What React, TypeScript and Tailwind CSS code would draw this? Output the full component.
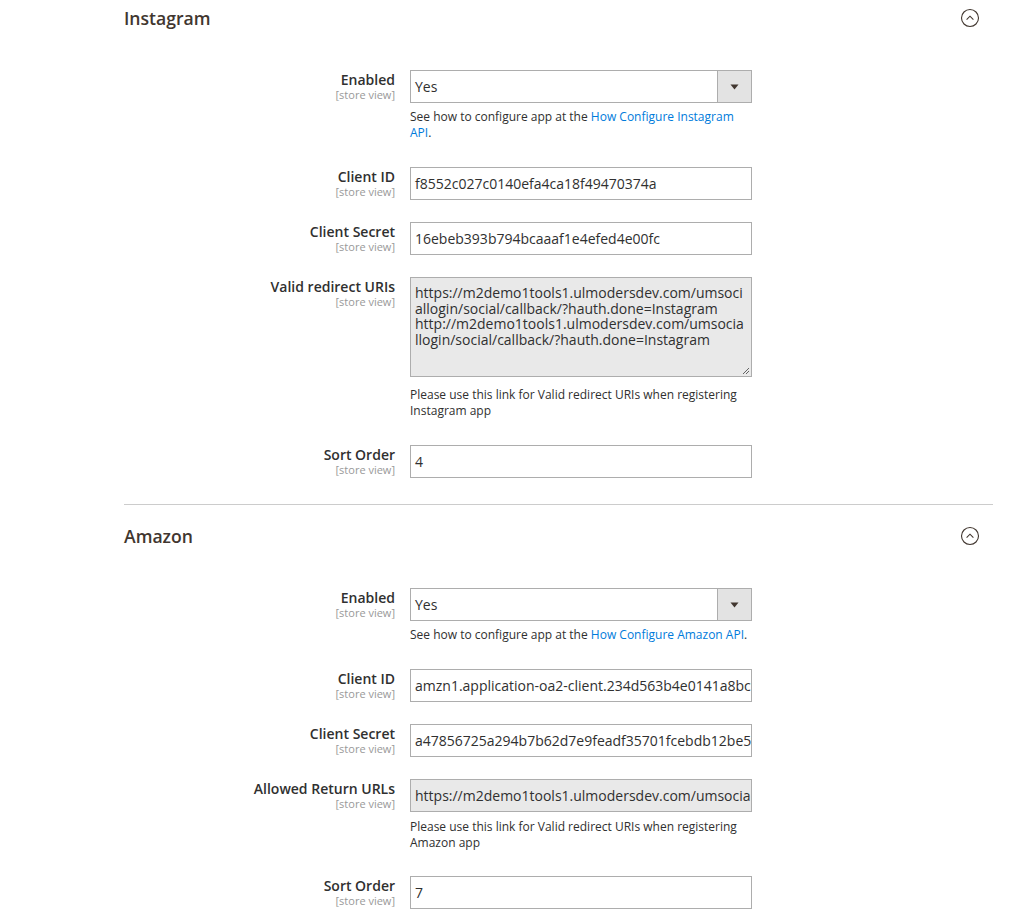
import React from "react";

const font = { fontFamily: '"Open Sans", "Liberation Sans", sans-serif' };

function CollapseIcon() {
  return (
    <svg width="20" height="20" viewBox="0 0 20 20" fill="none">
      <circle cx="10" cy="10" r="8.5" stroke="#41362f" strokeWidth="1.1" />
      <path d="M6.6 11.6 L10 8.2 L13.4 11.6" stroke="#41362f" strokeWidth="1.1" fill="none" />
    </svg>
  );
}

function Label({ text }: { text: string }) {
  return (
    <div className="w-[271px] shrink-0 text-right pt-[1px]">
      <div className="text-[14px] leading-[18px] font-semibold text-[#303030]">{text}</div>
      <div className="text-[11px] leading-[12px] text-[#999999]">[store view]</div>
    </div>
  );
}

function Row({ label, children, mb }: { label: string; children: React.ReactNode; mb: string }) {
  return (
    <div className={`flex ${mb}`}>
      <Label text={label} />
      <div className="ml-[15px] w-[342px]">{children}</div>
    </div>
  );
}

function Input({ value, disabled }: { value: string; disabled?: boolean }) {
  return (
    <div
      className={`h-[33px] border border-[#adadad] px-[4px] flex items-center overflow-hidden whitespace-nowrap text-[14px] text-[#303030] ${
        disabled ? "bg-[#e9e9e9]" : "bg-white"
      }`}
    >
      {value}
    </div>
  );
}

function Select({ value }: { value: string }) {
  return (
    <div className="h-[33px] border border-[#adadad] flex bg-white">
      <div className="flex-1 px-[4px] flex items-center text-[14px] text-[#303030]">{value}</div>
      <div className="w-[34px] border-l border-[#adadad] bg-[#e3e3e3] flex items-center justify-center">
        <svg width="9" height="6" viewBox="0 0 9 6">
          <path d="M0.5 0.5 H8.5 L4.5 5.5 Z" fill="#41362f" />
        </svg>
      </div>
    </div>
  );
}

function Note({ children, mt }: { children: React.ReactNode; mt: string }) {
  return <div className={`${mt} text-[12px] leading-[16px] text-[#303030]`}>{children}</div>;
}

function SectionHeader({ title }: { title: string }) {
  return (
    <div className="flex items-center justify-between h-[24px] pr-[13px]">
      <div className="text-[17.6px] leading-[24px] font-semibold text-[#41362f]">{title}</div>
      <CollapseIcon />
    </div>
  );
}

export default function App() {
  return (
    <div className="bg-white w-[1012px] h-[922px] overflow-hidden" style={font}>
      <div className="ml-[124px] w-[869px]">
        {/* Instagram */}
        <div className="pt-[6px]">
          <SectionHeader title="Instagram" />
          <div className="mt-[40px]">
            <Row label="Enabled" mb="mb-[26px]">
              <Select value="Yes" />
              <Note mt="mt-[6px]">
                See how to configure app at the{" "}
                <span className="text-[#007bdb]">How Configure Instagram API</span>.
              </Note>
            </Row>
            <Row label="Client ID" mb="mb-[22px]">
              <Input value="f8552c027c0140efa4ca18f49470374a" />
            </Row>
            <Row label="Client Secret" mb="mb-[22px]">
              <Input value="16ebeb393b794bcaaaf1e4efed4e00fc" />
            </Row>
            <Row label="Valid redirect URIs" mb="mb-[26px]">
              <div className="relative h-[100px] border border-[#adadad] bg-[#e9e9e9] pl-[4px] pt-[7px] text-[14px] leading-[15.7px] text-[#303030] whitespace-nowrap overflow-hidden">
                <div>https://m2demo1tools1.ulmodersdev.com/umsoci</div>
                <div>allogin/social/callback/?hauth.done=Instagram</div>
                <div>http://m2demo1tools1.ulmodersdev.com/umsocia</div>
                <div>llogin/social/callback/?hauth.done=Instagram</div>
                <svg className="absolute right-[1px] bottom-[1px]" width="8" height="8" viewBox="0 0 8 8">
                  <path d="M7 1 L1 7 M7 4 L4 7" stroke="#555" strokeWidth="0.9" />
                </svg>
              </div>
              <Note mt="mt-[10px]">
                Please use this link for Valid redirect URIs when registering Instagram app
              </Note>
            </Row>
            <Row label="Sort Order" mb="mb-[0px]">
              <Input value="4" />
            </Row>
          </div>
        </div>

        <div className="mt-[26px] border-t border-[#cccccc]" />

        {/* Amazon */}
        <div className="pt-[19px]">
          <SectionHeader title="Amazon" />
          <div className="mt-[40px]">
            <Row label="Enabled" mb="mb-[26px]">
              <Select value="Yes" />
              <Note mt="mt-[6px]">
                See how to configure app at the{" "}
                <span className="text-[#007bdb]">How Configure Amazon API</span>.
              </Note>
            </Row>
            <Row label="Client ID" mb="mb-[22px]">
              <Input value="amzn1.application-oa2-client.234d563b4e0141a8bc9f3e2a7d6c5b10" />
            </Row>
            <Row label="Client Secret" mb="mb-[22px]">
              <Input value="a47856725a294b7b62d7e9feadf35701fcebdb12be5f8c3d2a1b0e9f8d7c6b5a" />
            </Row>
            <Row label="Allowed Return URLs" mb="mb-[25px]">
              <Input disabled value="https://m2demo1tools1.ulmodersdev.com/umsociallogin/social/callback/?hauth.done=Amazon" />
              <Note mt="mt-[7px]">
                Please use this link for Valid redirect URIs when registering Amazon app
              </Note>
            </Row>
            <Row label="Sort Order" mb="mb-[0px]">
              <Input value="7" />
            </Row>
          </div>
        </div>
      </div>
    </div>
  );
}
